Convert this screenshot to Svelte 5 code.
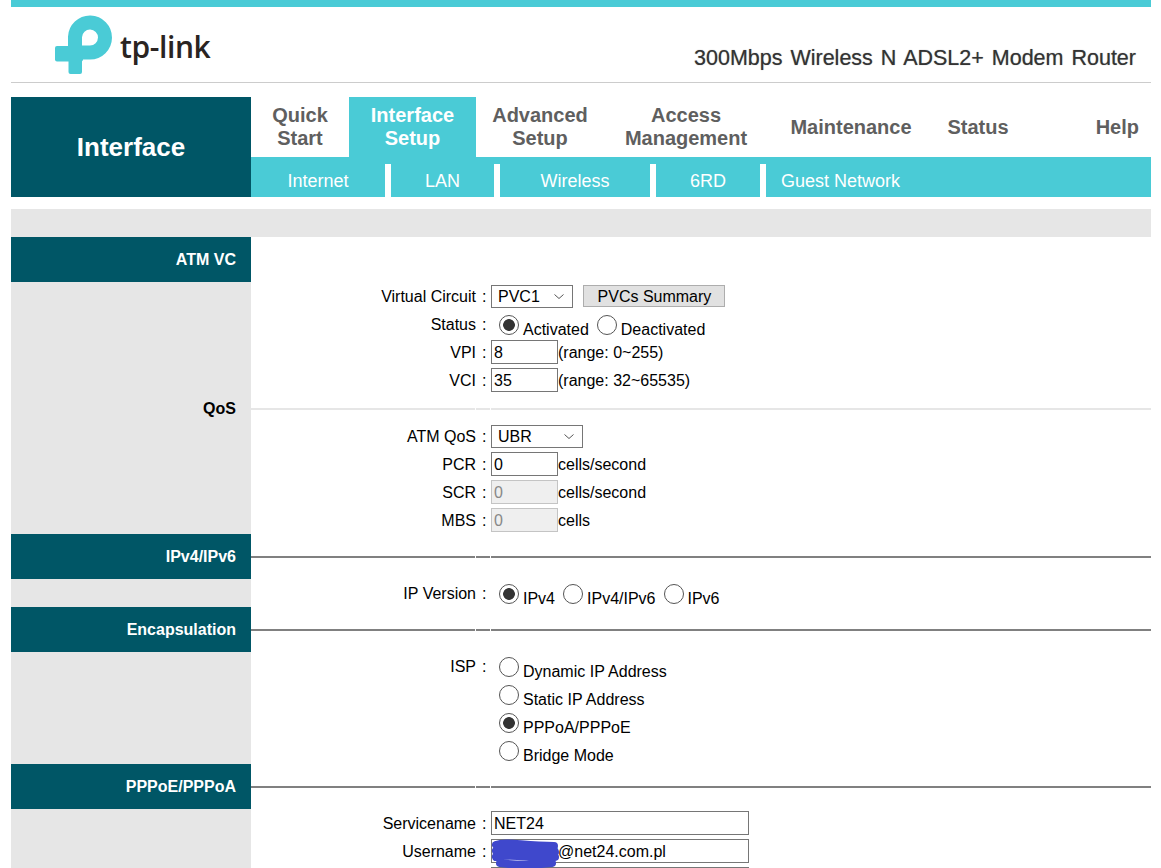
<script>
  const tabs = [
    { lines: ['Quick', 'Start'] },
    { lines: ['Interface', 'Setup'], active: true },
    { lines: ['Advanced', 'Setup'] },
    { lines: ['Access', 'Management'] },
    { lines: ['Maintenance'] },
    { lines: ['Status'] },
    { lines: ['Help'], help: true }
  ];
  const subTabs = ['Internet', 'LAN', 'Wireless', '6RD', 'Guest Network'];
</script>

{#snippet head(title, ruled = true)}
  <div class="row head" class:ruled>
    <div class="side dark">{title}</div>
    <div class="cell"></div>
    <div class="cell"></div>
    <div class="cell"></div>
  </div>
{/snippet}

{#snippet field(label, content, radios = false)}
  <div class="row" class:radios>
    <div class="side"></div>
    <div class="label">{label}</div>
    <div class="colon">{label ? ':' : ''}</div>
    <div class="value">{@render content()}</div>
  </div>
{/snippet}

{#snippet radio(name, text, checked = false)}
  <label class="opt"><input type="radio" {name} {checked} />{text}</label>
{/snippet}

{#snippet dropdown(cls, text)}
  <span class="drop">
    <select class={cls}><option>{text}</option></select>
    <svg class="chev" width="10" height="5" viewBox="0 0 10 5">
      <path d="M0.5 0.5L5 4.5L9.5 0.5" fill="none" stroke="#555" stroke-width="1" />
    </svg>
  </span>
{/snippet}

{#snippet vcRow()}
  {@render dropdown('sel-vc', 'PVC1')}
  <button class="summary">PVCs Summary</button>
{/snippet}
{#snippet statusRow()}
  {@render radio('status', 'Activated', true)}{@render radio('status', 'Deactivated')}
{/snippet}
{#snippet vpiRow()}<input class="short" value="8" />(range: 0~255){/snippet}
{#snippet vciRow()}<input class="short" value="35" />(range: 32~65535){/snippet}
{#snippet qosRow()}{@render dropdown('sel-qos', 'UBR')}{/snippet}
{#snippet pcrRow()}<input class="short" value="0" />cells/second{/snippet}
{#snippet scrRow()}<input class="short" value="0" disabled />cells/second{/snippet}
{#snippet mbsRow()}<input class="short" value="0" disabled />cells{/snippet}
{#snippet ipRow()}
  {@render radio('ipver', 'IPv4', true)}{@render radio('ipver', 'IPv4/IPv6')}{@render radio('ipver', 'IPv6')}
{/snippet}
{#snippet isp1()}{@render radio('isp', 'Dynamic IP Address')}{/snippet}
{#snippet isp2()}{@render radio('isp', 'Static IP Address')}{/snippet}
{#snippet isp3()}{@render radio('isp', 'PPPoA/PPPoE', true)}{/snippet}
{#snippet isp4()}{@render radio('isp', 'Bridge Mode')}{/snippet}
{#snippet serviceRow()}<input class="long" value="NET24" />{/snippet}
{#snippet userRow()}
  <span class="scribbled">
    <input class="long" value="xxxxxxxx@net24.com.pl" />
    <svg class="scribble" width="72" height="30" viewBox="0 0 72 30">
      <path d="M6 6C16 2 32 7 64 7M6 12C20 9 40 14 65 13M6 18C22 14 44 20 65 18M10 24C24 26 44 26 62 24" fill="none" stroke="#3f48cc" stroke-width="8" stroke-linecap="round" />
    </svg>
  </span>
{/snippet}
{#snippet passRow()}<input class="long" type="password" />{/snippet}

<div class="page">
  <div class="topbar"></div>

  <header>
    <div class="logo">
      <svg width="60" height="62" viewBox="55 13 60 62">
        <rect x="55" y="46" width="28" height="15.5" rx="2" fill="#4acbd6" />
        <rect x="68.5" y="40" width="13.5" height="34" rx="2" fill="#4acbd6" />
        <path d="M75 46V37A15 15 0 1 1 90 52.500H80" fill="none" stroke="#4acbd6" stroke-width="14" />
      </svg>
      <span class="wordmark">tp-link</span>
    </div>
    <div class="model">300Mbps Wireless N ADSL2+ Modem Router</div>
  </header>

  <nav>
    <div class="section-title">Interface</div>
    <div class="nav-right">
      <div class="tabs">
        {#each tabs as t}
          <div class="tab" class:active={t.active} class:help={t.help}>
            {#each t.lines as l}<span>{l}</span>{/each}
          </div>
        {/each}
      </div>
      <div class="subtabs">
        {#each subTabs as s}<div class="subtab">{s}</div>{/each}
      </div>
    </div>
  </nav>

  <div class="band"></div>

  {@render head('ATM VC', false)}
  {@render field('Virtual Circuit', vcRow)}
  {@render field('Status', statusRow, true)}
  {@render field('VPI', vpiRow)}
  {@render field('VCI', vciRow)}
  <div class="row qos">
    <div class="side bold">QoS</div>
    <div class="cell"></div>
    <div class="cell"></div>
    <div class="cell"></div>
  </div>
  {@render field('ATM QoS', qosRow)}
  {@render field('PCR', pcrRow)}
  {@render field('SCR', scrRow)}
  {@render field('MBS', mbsRow)}
  {@render head('IPv4/IPv6')}
  {@render field('IP Version', ipRow, true)}
  {@render head('Encapsulation')}
  {@render field('ISP', isp1, true)}
  {@render field('', isp2, true)}
  {@render field('', isp3, true)}
  {@render field('', isp4, true)}
  {@render head('PPPoE/PPPoA')}
  {@render field('Servicename', serviceRow)}
  {@render field('Username', userRow)}
  {@render field('', passRow)}
</div>

<style>
  :global(html), :global(body) {
    margin: 0;
    overflow: hidden;
    background: #fff;
  }

  .page {
    width: 1140px;
    height: 868px;
    margin-left: 11px;
    overflow: hidden;
    font-family: "Liberation Sans", Arial, sans-serif;
    font-size: 16px;
    color: #000;
  }

  .topbar { height: 7px; background: #4acbd6; }

  header {
    display: flex;
    justify-content: space-between;
    height: 75px;
    border-bottom: 1px solid #ccc;
  }

  .logo {
    display: flex;
    align-items: flex-start;
    padding: 6px 0 0 44px;
  }

  .wordmark {
    margin: 14px 0 0 5px;
    font-family: "Open Sans", sans-serif;
    font-size: 30px;
    font-weight: 600;
    letter-spacing: -0.4px;
    line-height: 40px;
    color: #2a2422;
  }

  .model {
    align-self: flex-end;
    margin: 0 15px 12px 0;
    font-size: 21.5px;
    line-height: 24px;
    word-spacing: 2px;
    color: #333;
    text-shadow: 0 0 1px rgba(0, 0, 0, 0.45);
  }

  nav {
    display: grid;
    grid-template-columns: 240px 1fr;
    height: 100px;
    margin-top: 14px;
  }

  .section-title {
    display: flex;
    align-items: center;
    justify-content: center;
    background: #005666;
    color: #fff;
    font-size: 26px;
    font-weight: bold;
  }

  .tabs {
    display: grid;
    grid-template-columns: 98px 127px 128px 164px 166px 88px 1fr;
    height: 60px;
  }

  .tab {
    display: flex;
    flex-direction: column;
    align-items: center;
    justify-content: center;
    color: #5f5f5f;
    font-size: 20px;
    font-weight: bold;
    line-height: 23px;
  }

  .tab.active { background: #4acbd6; color: #fff; }
  .tab.help { align-items: flex-end; padding-right: 12px; }

  .subtabs {
    display: grid;
    grid-template-columns: 140px 109px 156px 110px 1fr;
    height: 40px;
    background: #4acbd6;
    color: #fff;
    font-size: 18px;
  }

  .subtab {
    display: flex;
    align-items: center;
    justify-content: center;
    box-sizing: border-box;
    height: 33px;
    margin-top: 7px;
    padding-top: 1px;
    border-right: 6px solid #fff;
  }

  .subtab:last-child {
    justify-content: flex-start;
    padding-left: 15px;
    border-right: 0;
  }

  .band {
    height: 28px;
    margin-top: 12px;
    background: #e6e6e6;
  }

  .row {
    display: grid;
    grid-template-columns: 240px 225px 15px 1fr;
    height: 28px;
    align-items: center;
  }

  .row.head { height: 45px; }

  .side {
    align-self: stretch;
    display: flex;
    align-items: center;
    justify-content: flex-end;
    padding-right: 15px;
    background: #e6e6e6;
    font-weight: bold;
  }

  .side.dark { background: #005666; color: #fff; }
  .side.bold { padding-top: 2px; }

  .cell { align-self: stretch; margin-right: 1px; }
  .cell:last-child { margin-right: 0; }

  .head.ruled .cell {
    background: linear-gradient(#808080, #808080) 0 22px / 100% 2px no-repeat;
  }

  .qos .cell {
    background: linear-gradient(#e6e6e6, #e6e6e6) 0 14px / 100% 2px no-repeat;
  }

  .label { text-align: right; padding-top: 2px; }
  .colon { padding: 2px 0 0 6px; }
  .radios .label { padding-top: 0; }
  .radios .colon { padding-top: 0; }
  .value { white-space: nowrap; }

  input:not([type="radio"]) {
    box-sizing: border-box;
    height: 24px;
    padding: 1px 2px 0;
    border: 1px solid #767676;
    background: #fff;
    font: inherit;
    color: #000;
  }

  input.short { width: 67px; }
  input.long { width: 258px; }

  input:disabled {
    background: #efefef;
    border-color: #c4c4c4;
    color: #888;
  }

  .drop {
    position: relative;
    display: inline-block;
    vertical-align: middle;
  }

  select {
    display: block;
    appearance: none;
    box-sizing: border-box;
    height: 23px;
    padding: 0 0 0 6px;
    border: 1px solid #767676;
    border-radius: 0;
    background: #fff;
    font: inherit;
    color: #000;
  }

  .sel-vc { width: 82px; }
  .sel-qos { width: 92px; }

  .chev {
    position: absolute;
    right: 9px;
    top: 9px;
    pointer-events: none;
  }

  .summary {
    box-sizing: border-box;
    width: 142px;
    height: 22px;
    margin-left: 6px;
    padding: 2px 0 0;
    border: 1px solid #adadad;
    background: #e1e1e1;
    font: inherit;
    color: #000;
    vertical-align: middle;
  }

  .opt {
    display: inline-block;
    padding-top: 2px;
    white-space: nowrap;
  }

  input[type="radio"] {
    appearance: none;
    box-sizing: border-box;
    width: 20px;
    height: 20px;
    margin: 3px 4px 0 8px;
    border: 1.5px solid #555;
    border-radius: 50%;
    background: #fff;
  }

  input[type="radio"]:checked {
    background: radial-gradient(circle, #333 0 5.5px, #fff 6.2px);
  }

  .scribbled { position: relative; display: inline-block; }

  .scribble {
    position: absolute;
    left: -1px;
    top: 0;
    pointer-events: none;
  }
</style>
